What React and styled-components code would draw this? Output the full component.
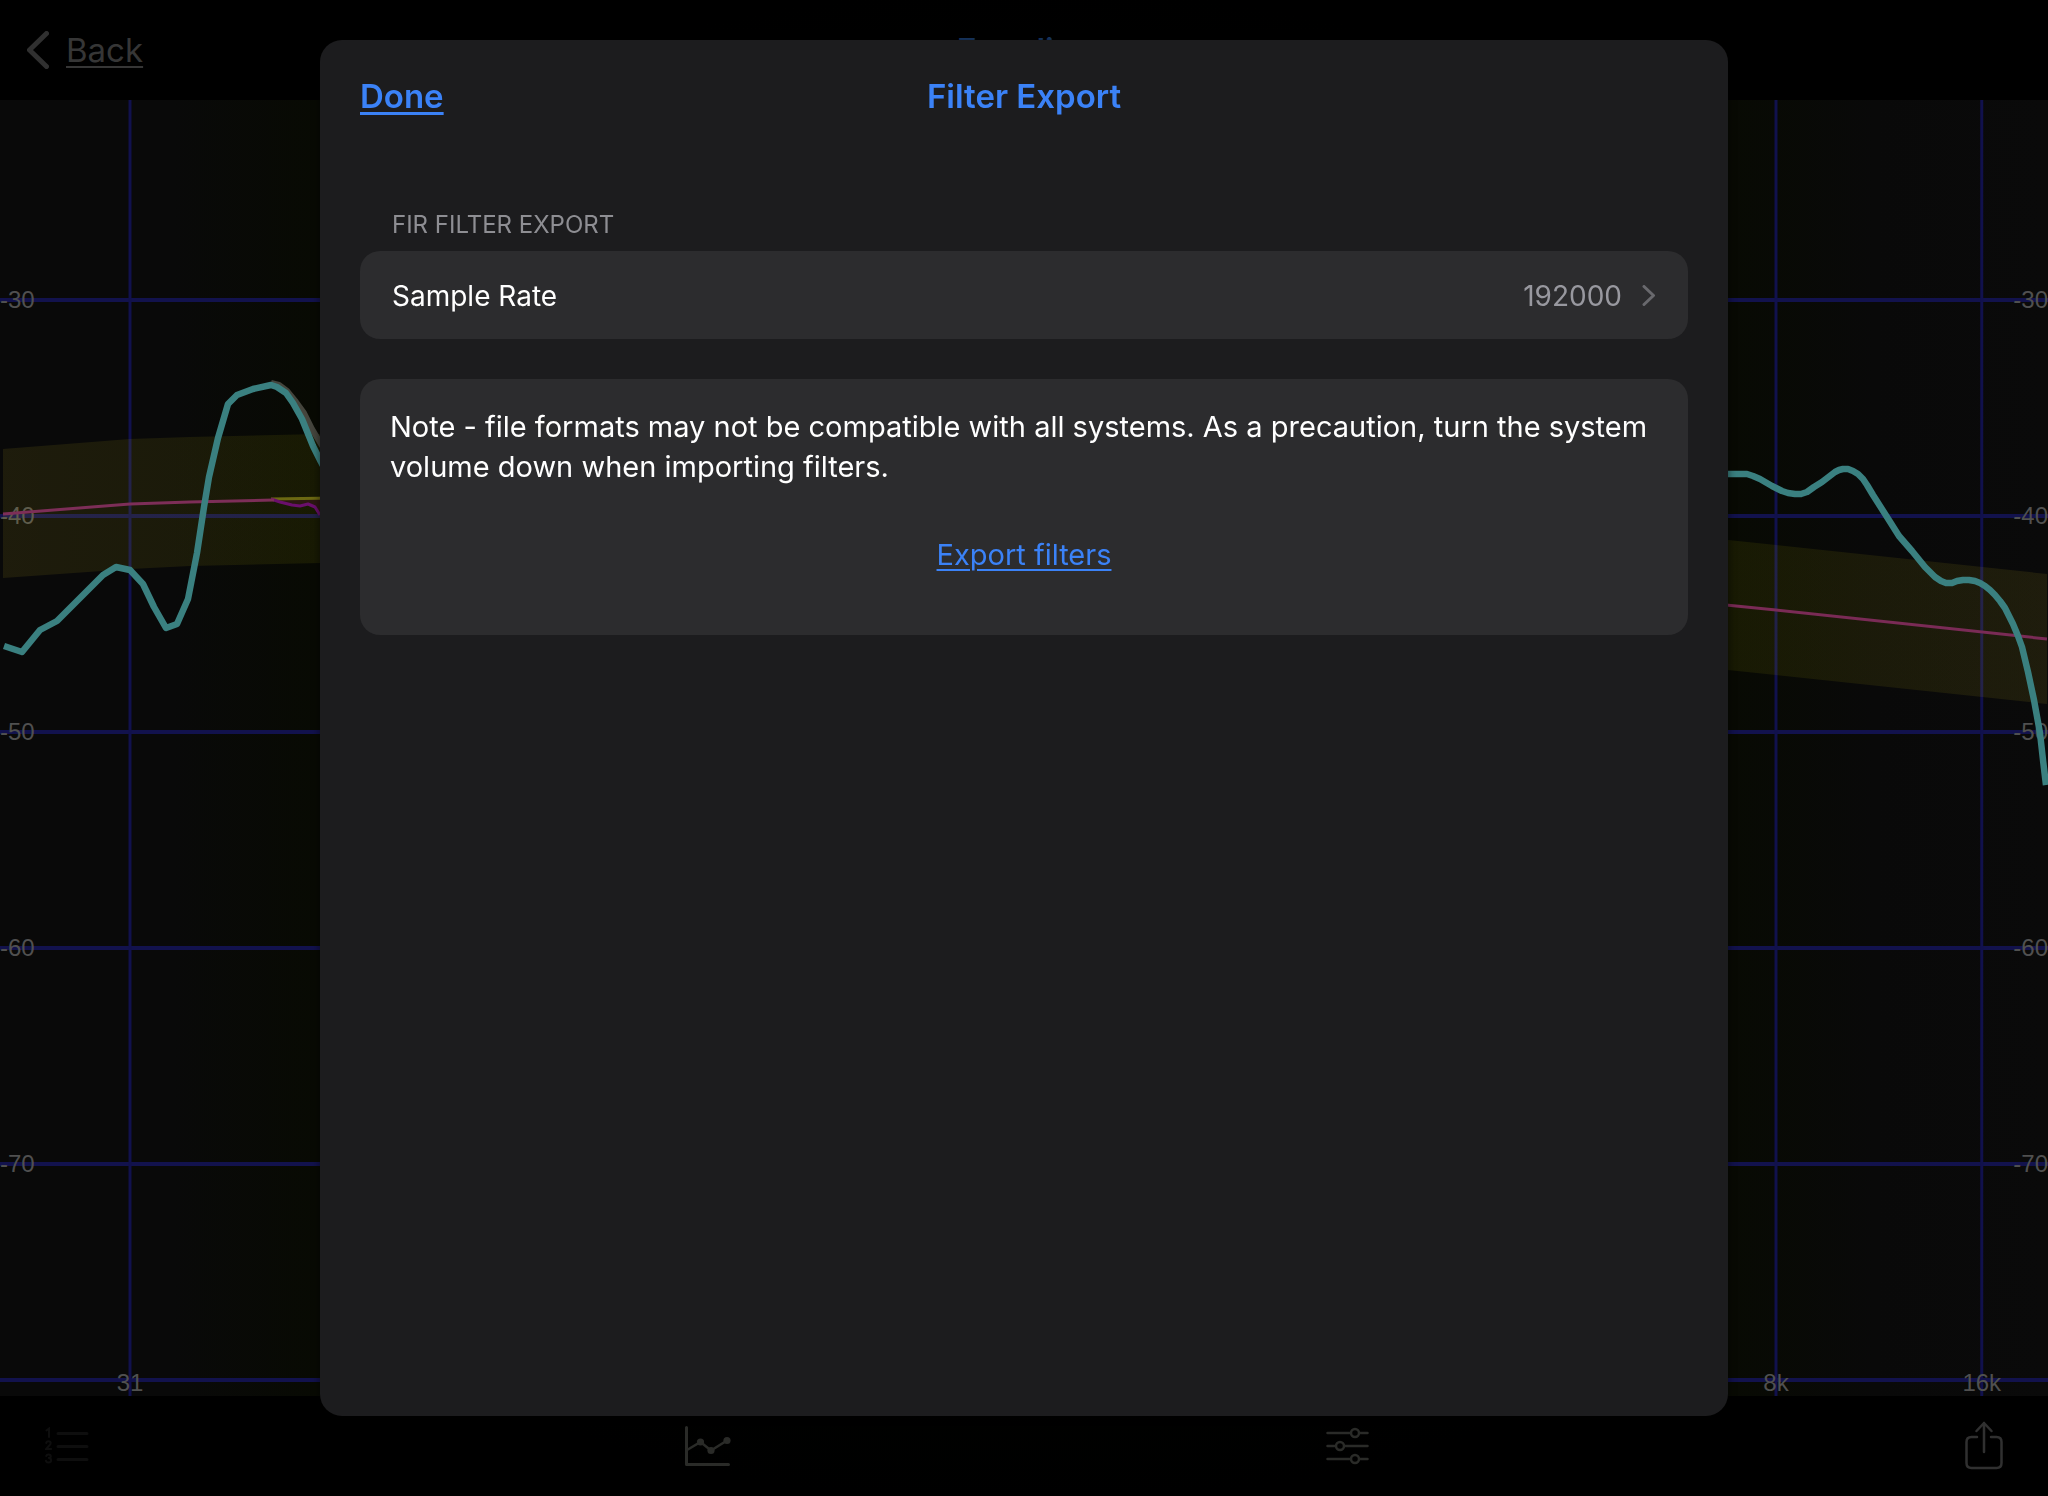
import React from "react";
import styled, { createGlobalStyle } from "styled-components";

const GlobalStyle = createGlobalStyle`
  * {
    box-sizing: border-box;
  }
  body {
    margin: 0;
    background-color: #000;
    font-family: Inter, "Liberation Sans", sans-serif;
  }
  button {
    padding: 0;
    border: 0;
    background: none;
    font: inherit;
    cursor: pointer;
  }
`;

const Page = styled.div`
  display: flex;
  flex-direction: column;
  height: 100vh;
  overflow: hidden;
  background: radial-gradient(ellipse at center, #010300 50%, #000 72%);
`;

const NavBar = styled.header`
  display: grid;
  grid-template-columns: 1fr auto 1fr;
  align-items: center;
  flex: none;
  height: 100px;
  padding: 0 27px;
`;

const BackButton = styled.button`
  display: flex;
  align-items: center;
  gap: 17px;
  justify-self: start;
  font-size: 33px;
  line-height: 40px;
  color: #363636;
`;

const BackText = styled.span`
  text-decoration: underline;
  text-decoration-thickness: 2px;
  text-underline-offset: 4px;
`;

const NavTitle = styled.h1`
  margin: 0;
  font-size: 33px;
  line-height: 40px;
  font-weight: 600;
  color: #1b3f73;
`;

const ChartSvg = styled.svg`
  display: block;
  flex: 1;
  width: 100%;
  min-height: 0;
`;

const AxisLabel = styled.text`
  font-family: "Liberation Sans", Arial, sans-serif;
  font-size: 24px;
  fill: #505050;
`;

const TabBar = styled.nav`
  display: flex;
  align-items: center;
  justify-content: space-between;
  flex: none;
  height: 100px;
  padding: 0 45px;
`;

const TabButton = styled.button`
  display: flex;
  color: ${(props) => props.$color};
`;

const Overlay = styled.div`
  position: fixed;
  inset: 0;
  display: flex;
  justify-content: center;
  padding: 40px 40px 80px;
`;

const Sheet = styled.section`
  width: 100%;
  max-width: 1408px;
  padding: 36px 40px;
  border-radius: 22px;
  background-color: #1c1c1e;
  box-shadow: 0 0 8px rgba(0, 0, 0, 0.6);
`;

const SheetHeader = styled.div`
  display: grid;
  grid-template-columns: 1fr auto 1fr;
  align-items: center;
  font-size: 33px;
  line-height: 40px;
  font-weight: 600;
  color: #3b82f7;
`;

const DoneButton = styled.button`
  justify-self: start;
  color: inherit;
  text-decoration: underline;
  text-decoration-thickness: 3px;
  text-underline-offset: 4px;
`;

const SheetTitle = styled.h2`
  margin: 0;
  font: inherit;
`;

const SectionLabel = styled.h3`
  margin: 93px 32px 10px;
  font-size: 24px;
  line-height: 32px;
  font-weight: 400;
  color: #8e8e93;
`;

const RowButton = styled.button`
  display: flex;
  align-items: center;
  width: 100%;
  height: 88px;
  padding: 1px 32px 0;
  border-radius: 20px;
  background-color: #2c2c2e;
  font-size: 28px;
  line-height: 40px;
  color: #fff;
`;

const RowValue = styled.span`
  margin: 0 20px 0 auto;
  color: #98989f;
`;

const NoteCard = styled.div`
  display: flex;
  flex-direction: column;
  align-items: center;
  margin-top: 40px;
  padding: 28px 30px 60px;
  border-radius: 20px;
  background-color: #2c2c2e;
  font-size: 29px;
  line-height: 40px;
`;

const Note = styled.p`
  width: 100%;
  margin: 0 0 48px;
  color: #fff;
`;

const ExportButton = styled.button`
  color: #3b82f7;
  text-decoration: underline;
  text-decoration-thickness: 2px;
  text-underline-offset: 4px;
`;

const LEVELS = [-30, -40, -50, -60, -70, -80];
const OCTAVES = [0, 1, 2, 3, 4, 5, 6, 7, 8, 9];
const FREQUENCIES = [
  { octave: 0, label: "31" },
  { octave: 8, label: "8k" },
  { octave: 9, label: "16k" },
];

const levelY = (db) => 200 + (-30 - db) * 21.6;
const octaveX = (n) => 130 + n * 205.75;

const MEASURED_LOW =
  "4,546 22,552 40,530 57,521 103,475 116,467 130,470 143,484 154,507 166,528 177,524 188,499 197,453 204,407 209,377 218,338 228,304 237,295 253,289 271,285 277,287 286,293 293,303 302,319 313,346 321,362 334,386";
const MEASURED_HIGH =
  "1716,374 1728,374 1747,374 1753,376 1760,379 1772,386 1782,391 1788,393 1795,394 1801,394 1807,392 1814,387 1822,382 1835,372 1839,370 1843,369 1848,369 1853,371 1858,374 1863,379 1867,385 1873,395 1887,417 1899,436 1912,451 1925,467 1935,477 1941,481 1946,483 1952,483 1957,481 1963,480 1969,480 1975,481 1980,483 1985,486 1990,490 1995,495 2000,501 2005,508 2013,524 2018,536 2022,547 2028,572 2034,600 2040,633 2043,660 2046,685";
const UNFILTERED =
  "271,283 279,285 287,291 296,302 304,313 312,329 321,344 334,363";
const BAND =
  "3,349 130,339 190,337 320,334 1728,440 1776,445 2047,474 2047,604 1776,575 1728,570 320,463 190,466 130,469 3,478";

const Chart = () => (
  <ChartSvg
    viewBox="0 0 2048 1296"
    preserveAspectRatio="none"
    role="img"
    aria-label="Frequency response"
  >
    <defs>
      <linearGradient id="plot">
        <stop offset="0" stopColor="#090909" />
        <stop offset="0.085" stopColor="#090909" />
        <stop offset="0.155" stopColor="#080a03" />
        <stop offset="0.845" stopColor="#080a03" />
        <stop offset="0.915" stopColor="#090909" />
        <stop offset="1" stopColor="#0a0a0a" />
      </linearGradient>
      <linearGradient id="band">
        <stop offset="0" stopColor="#ffe428" stopOpacity="0.085" />
        <stop offset="0.155" stopColor="#f0f000" stopOpacity="0.07" />
        <stop offset="0.845" stopColor="#f0f000" stopOpacity="0.07" />
        <stop offset="1" stopColor="#ffe428" stopOpacity="0.085" />
      </linearGradient>
    </defs>
    <rect width="2048" height="1296" fill="url(#plot)" />
    <g stroke="#12124d" strokeWidth="4">
      {LEVELS.map((db) => (
        <line key={db} x1="0" x2="2048" y1={levelY(db)} y2={levelY(db)} />
      ))}
    </g>
    <g stroke="#11114d" strokeWidth="3">
      {OCTAVES.map((n) => (
        <line key={n} x1={octaveX(n)} x2={octaveX(n)} y1="0" y2="1296" />
      ))}
    </g>
    {LEVELS.slice(0, 5).map((db) => (
      <React.Fragment key={db}>
        <AxisLabel x="0" y={levelY(db) + 8}>
          {db}
        </AxisLabel>
        <AxisLabel x="2048" y={levelY(db) + 8} textAnchor="end">
          {db}
        </AxisLabel>
      </React.Fragment>
    ))}
    {FREQUENCIES.map(({ octave, label }) => (
      <AxisLabel key={label} x={octaveX(octave)} y="1291" textAnchor="middle">
        {label}
      </AxisLabel>
    ))}
    <polygon points={BAND} fill="url(#band)" />
    <polygon
      points="271,399 320,398 320,415 315,407 308,404 300,406 292,405 280,402"
      fill="#2c1812"
    />
    <g fill="none" strokeLinejoin="round">
      <polyline points="271,399 334,398" stroke="#6b6812" strokeWidth="3" />
      <polyline
        points="271,399 280,402 292,405 300,406 308,404 315,407 320,415"
        stroke="#6a0f6c"
        strokeWidth="3"
      />
      <polyline
        points="3,414 130,404 190,402 274,400"
        stroke="#7d2e58"
        strokeWidth="3"
      />
      <polyline
        points="1716,504 1776,510 2047,539"
        stroke="#7a2b56"
        strokeWidth="3"
      />
      <polyline points={UNFILTERED} stroke="#45453d" strokeWidth="6" />
      <g stroke="#3a8080" strokeWidth="6.5">
        <polyline points={MEASURED_LOW} />
        <polyline points={MEASURED_HIGH} />
      </g>
    </g>
  </ChartSvg>
);

const BackIcon = () => (
  <svg width="22" height="38" viewBox="0 0 22 38" fill="none">
    <path
      d="M19.5 2.5L2.5 19l17 16.5"
      stroke="#303030"
      strokeWidth="5"
      strokeLinecap="round"
      strokeLinejoin="round"
    />
  </svg>
);

const ChevronIcon = () => (
  <svg width="14" height="22" viewBox="0 0 14 22" fill="none">
    <path
      d="M2 1.5l9.500 9-9.500 9"
      stroke="#69696d"
      strokeWidth="3"
      strokeLinecap="round"
      strokeLinejoin="round"
    />
  </svg>
);

const ListIcon = () => (
  <svg width="44" height="38" viewBox="0 0 44 38" fill="none">
    <g stroke="currentColor" strokeWidth="3" strokeLinecap="round">
      <path d="M13 6.5h29M13 19.5h29M13 32.5h29" />
      <path
        d="M1.5 3.5L4 1.5V10M1.2 16q.3-1.8 2.3-1.8 2.2 0 2.2 1.9 0 1.3-1.7 2.7L1.2 22h5M1.2 29q.5-1.6 2.3-1.6 2.3 0 2.3 1.9T3.2 31q2.9 0 2.9 2.2T3.4 35.5q-2.2 0-2.5-1.8"
        strokeWidth="2"
      />
    </g>
  </svg>
);

const GraphIcon = () => (
  <svg width="46" height="40" viewBox="0 0 46 40" fill="none">
    <path
      d="M1.5 1.5V38.5H43.5"
      stroke="currentColor"
      strokeWidth="3"
      strokeLinecap="round"
      strokeLinejoin="round"
    />
    <path
      d="M2 24l13.5-8L26 24.5 42 14.5"
      stroke="currentColor"
      strokeWidth="2.5"
    />
    <g fill="currentColor">
      <circle cx="15.5" cy="16" r="3.6" />
      <circle cx="26" cy="24.5" r="3.6" />
      <circle cx="42" cy="14.5" r="3.6" />
    </g>
  </svg>
);

const SlidersIcon = () => (
  <svg width="43" height="38" viewBox="0 0 43 38" fill="none">
    <g stroke="currentColor" strokeWidth="2.5" strokeLinecap="round">
      <path d="M1.5 6H24M34 6h7.5M1.5 19H9M19 19h22.5M1.5 32H24M34 32h7.5" />
      <circle cx="29" cy="6" r="4" />
      <circle cx="14" cy="19" r="4" />
      <circle cx="29" cy="32" r="4" />
    </g>
  </svg>
);

const ShareIcon = () => (
  <svg width="38" height="50" viewBox="0 0 38 50" fill="none">
    <g
      stroke="currentColor"
      strokeWidth="2.5"
      strokeLinecap="round"
      strokeLinejoin="round"
    >
      <path d="M12 16H6.5Q1.5 16 1.5 21V42Q1.5 47 6.5 47H31.5Q36.5 47 36.5 42V21Q36.5 16 31.5 16H26" />
      <path d="M19 31V2M11.5 10L19 2l7.5 8" />
    </g>
  </svg>
);

const App = () => (
  <>
    <GlobalStyle />
    <Page>
      <NavBar>
        <BackButton type="button">
          <BackIcon />
          <BackText>Back</BackText>
        </BackButton>
        <NavTitle>Equalize</NavTitle>
      </NavBar>
      <Chart />
      <TabBar>
        <TabButton type="button" aria-label="Measurements" $color="#0e0e0e">
          <ListIcon />
        </TabButton>
        <TabButton type="button" aria-label="Chart" $color="#2a2b28">
          <GraphIcon />
        </TabButton>
        <TabButton type="button" aria-label="Settings" $color="#2a2b28">
          <SlidersIcon />
        </TabButton>
        <TabButton type="button" aria-label="Share" $color="#303030">
          <ShareIcon />
        </TabButton>
      </TabBar>
    </Page>
    <Overlay>
      <Sheet role="dialog" aria-labelledby="sheet-title">
        <SheetHeader>
          <DoneButton type="button">Done</DoneButton>
          <SheetTitle id="sheet-title">Filter Export</SheetTitle>
        </SheetHeader>
        <SectionLabel>FIR FILTER EXPORT</SectionLabel>
        <RowButton type="button">
          Sample Rate
          <RowValue>192000</RowValue>
          <ChevronIcon />
        </RowButton>
        <NoteCard>
          <Note>
            Note - file formats may not be compatible with all systems. As a
            precaution, turn the system volume down when importing filters.
          </Note>
          <ExportButton type="button">Export filters</ExportButton>
        </NoteCard>
      </Sheet>
    </Overlay>
  </>
);

export default App;
